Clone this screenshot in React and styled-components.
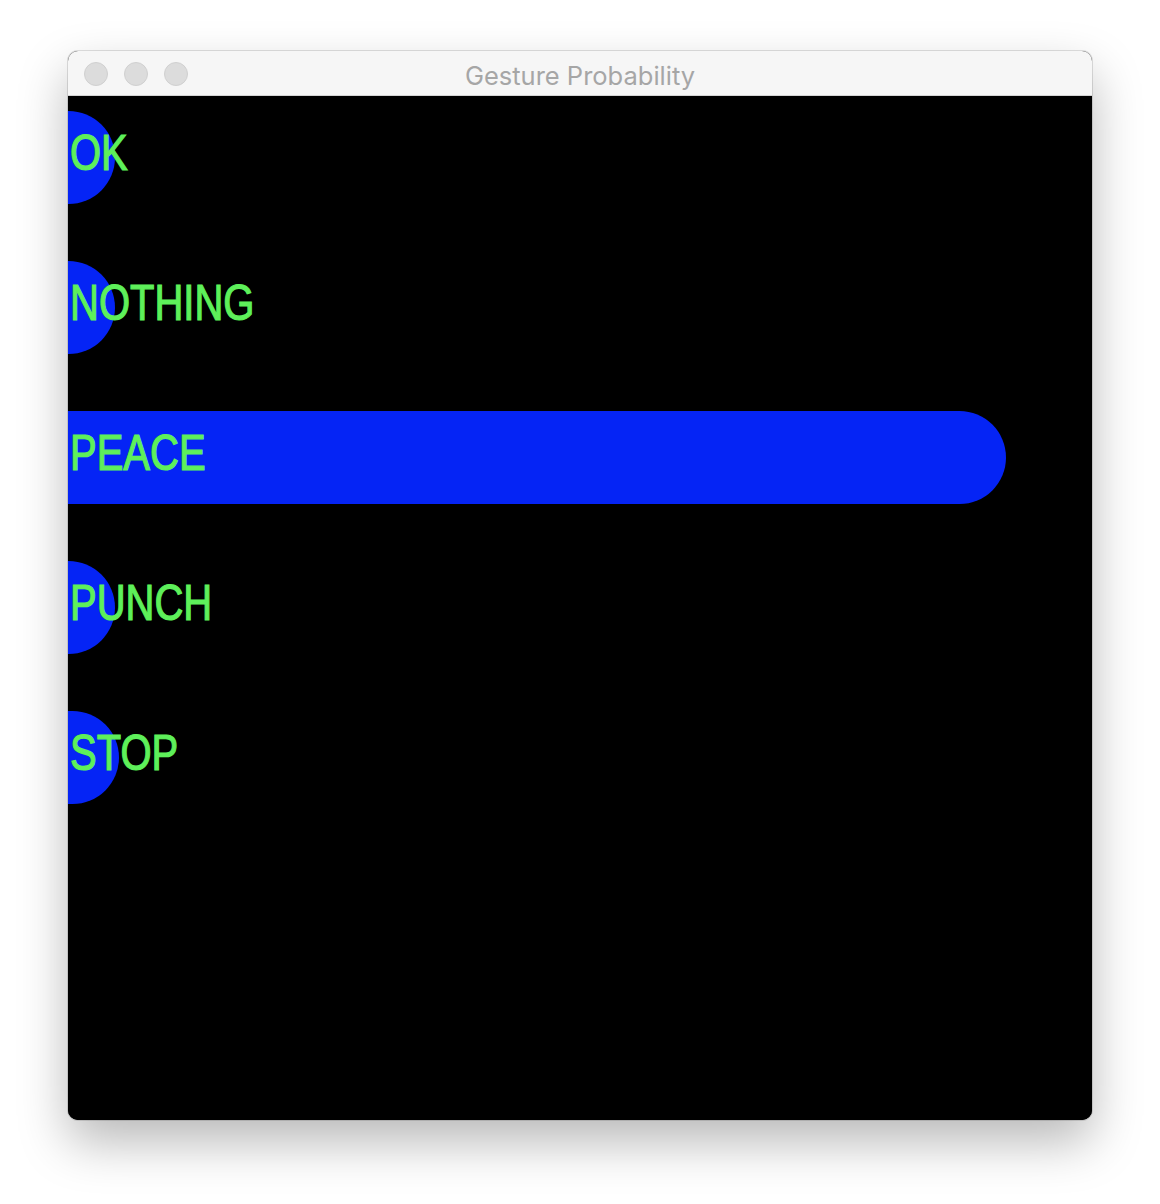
import React from "react";
import styled, { createGlobalStyle } from "styled-components";

const gestures = [
	{ label: "OK", end: 0 },
	{ label: "NOTHING", end: 0 },
	{ label: "PEACE", end: 891 },
	{ label: "PUNCH", end: 0 },
	{ label: "STOP", end: 4 },
];

const BAR = 93;

const App = () => {
	return (
		<>
			<Global />
			<Page>
				<Window>
					<TitleBar>
						<Lights>
							<Light />
							<Light />
							<Light />
						</Lights>
						<Title>Gesture Probability</Title>
					</TitleBar>
					<Canvas>
						{gestures.map((g) => (
							<Row key={g.label}>
								<Bar style={{ width: g.end + BAR }} />
								<Label>{g.label}</Label>
							</Row>
						))}
					</Canvas>
				</Window>
			</Page>
		</>
	);
};

export default App;

const Global = createGlobalStyle`
	body {
		margin: 0;
		background: #ffffff;
		font-family: "Liberation Sans", Arial, sans-serif;
	}
`;

const Page = styled.div`
	width: 1160px;
	height: 1204px;
	padding: 51px 0 0 68px;
	box-sizing: border-box;
`;

const Window = styled.div`
	width: 1024px;
	border-radius: 10px;
	overflow: hidden;
	background: #000;
	box-shadow: 0 22px 50px rgba(0, 0, 0, 0.28), 0 0 0 1px rgba(0, 0, 0, 0.12);
`;

const TitleBar = styled.div`
	height: 44px;
	background: #f6f6f6;
	border-bottom: 1px solid #d4d4d4;
	display: grid;
	grid-template-columns: 1fr;
	align-items: center;
`;

const Lights = styled.div`
	grid-area: 1 / 1;
	display: flex;
	gap: 16px;
	padding-left: 16px;
	padding-top: 2px;
`;

const Light = styled.span`
	width: 22px;
	height: 22px;
	border-radius: 50%;
	background: #dcdcdc;
	border: 1px solid #d0d0d0;
`;

const Title = styled.div`
	grid-area: 1 / 1;
	text-align: center;
	font-family: Inter, "Liberation Sans", sans-serif;
	font-size: 25.5px;
	color: #a6a6a6;
	padding-top: 4px;
`;

const Canvas = styled.div`
	height: 1024px;
	background: #000;
	display: flex;
	flex-direction: column;
	gap: 57px;
	padding-top: 15px;
	box-sizing: border-box;
	overflow: hidden;
`;

const Row = styled.div`
	height: ${BAR}px;
	display: grid;
	grid-template-columns: 1fr;
`;

const Bar = styled.div`
	grid-area: 1 / 1;
	height: ${BAR}px;
	margin-left: -${BAR / 2}px;
	border-radius: ${BAR / 2}px;
	background: #0524f5;
`;

const Label = styled.div`
	grid-area: 1 / 1;
	align-self: start;
	margin-top: 17px;
	margin-left: 2px;
	font-family: "Liberation Sans", Arial, sans-serif;
	font-size: 50px;
	line-height: 50px;
	color: #5ef05a;
	-webkit-text-stroke: 1.2px #5ef05a;
	transform: scaleX(0.8);
	transform-origin: left center;
	white-space: nowrap;
`;
